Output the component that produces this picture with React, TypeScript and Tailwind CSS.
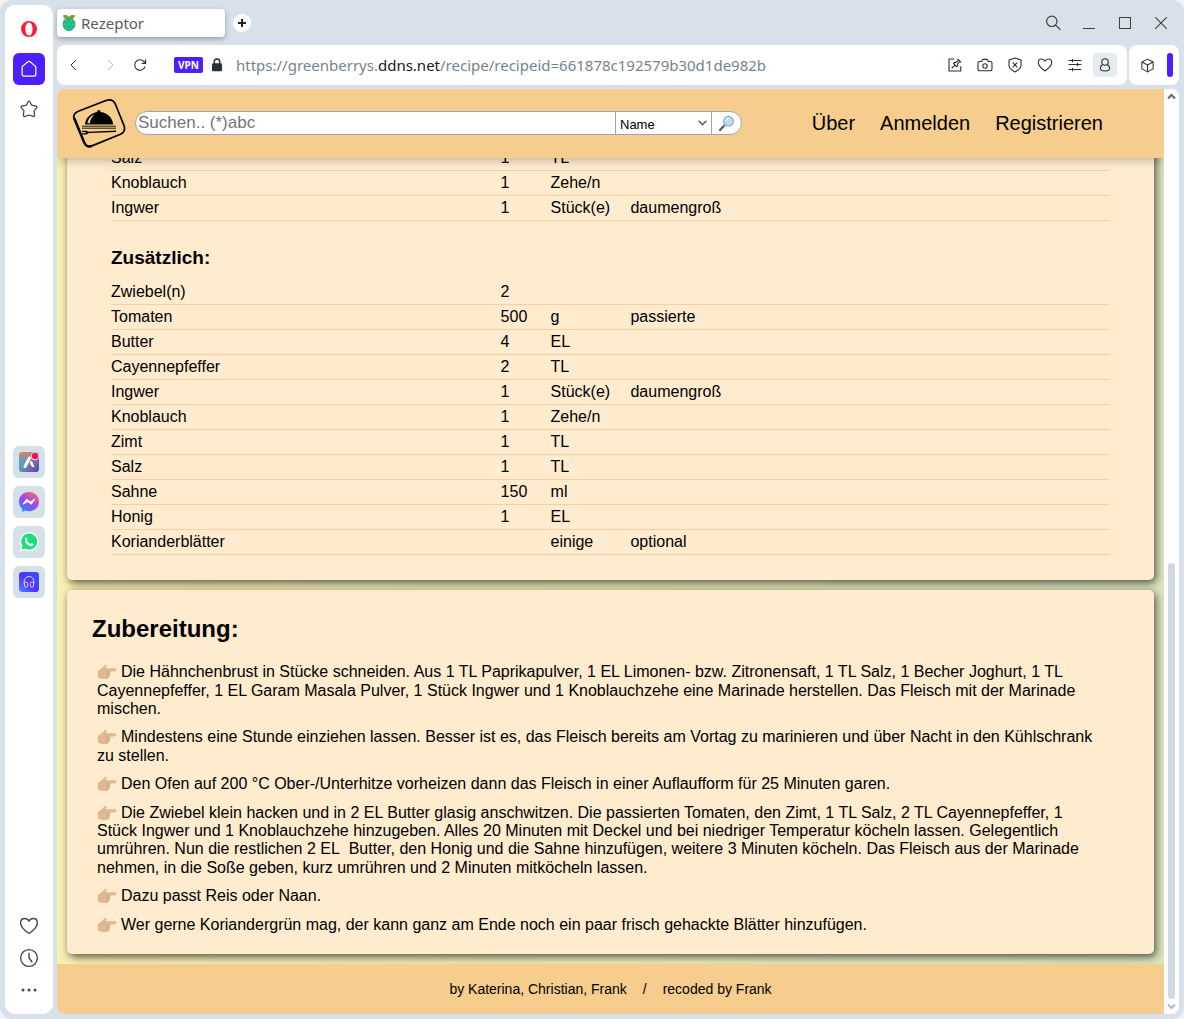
import React from "react";

type Ingredient = { name: string; amount?: string; unit?: string; note?: string };

const marinade: Ingredient[] = [
  { name: "Salz", amount: "1", unit: "TL" },
  { name: "Knoblauch", amount: "1", unit: "Zehe/n" },
  { name: "Ingwer", amount: "1", unit: "Stück(e)", note: "daumengroß" },
];

const extras: Ingredient[] = [
  { name: "Zwiebel(n)", amount: "2" },
  { name: "Tomaten", amount: "500", unit: "g", note: "passierte" },
  { name: "Butter", amount: "4", unit: "EL" },
  { name: "Cayennepfeffer", amount: "2", unit: "TL" },
  { name: "Ingwer", amount: "1", unit: "Stück(e)", note: "daumengroß" },
  { name: "Knoblauch", amount: "1", unit: "Zehe/n" },
  { name: "Zimt", amount: "1", unit: "TL" },
  { name: "Salz", amount: "1", unit: "TL" },
  { name: "Sahne", amount: "150", unit: "ml" },
  { name: "Honig", amount: "1", unit: "EL" },
  { name: "Korianderblätter", unit: "einige", note: "optional" },
];

const steps = [
  "Die Hähnchenbrust in Stücke schneiden. Aus 1 TL Paprikapulver, 1 EL Limonen- bzw. Zitronensaft, 1 TL Salz, 1 Becher Joghurt, 1 TL Cayennepfeffer, 1 EL Garam Masala Pulver, 1 Stück Ingwer und 1 Knoblauchzehe eine Marinade herstellen. Das Fleisch mit der Marinade mischen.",
  "Mindestens eine Stunde einziehen lassen. Besser ist es, das Fleisch bereits am Vortag zu marinieren und über Nacht in den Kühlschrank zu stellen.",
  "Den Ofen auf 200 °C Ober-/Unterhitze vorheizen dann das Fleisch in einer Auflaufform für 25 Minuten garen.",
  "Die Zwiebel klein hacken und in 2 EL Butter glasig anschwitzen. Die passierten Tomaten, den Zimt, 1 TL Salz, 2 TL Cayennepfeffer, 1 Stück Ingwer und 1 Knoblauchzehe hinzugeben. Alles 20 Minuten mit Deckel und bei niedriger Temperatur köcheln lassen. Gelegentlich umrühren. Nun die restlichen 2 EL\u00a0 Butter, den Honig und die Sahne hinzufügen, weitere 3 Minuten köcheln. Das Fleisch aus der Marinade nehmen, in die Soße geben, kurz umrühren und 2 Minuten mitköcheln lassen.",
  "Dazu passt Reis oder Naan.",
  "Wer gerne Koriandergrün mag, der kann ganz am Ende noch ein paar frisch gehackte Blätter hinzufügen.",
];

function Icon({ size = 16, className = "", sw = 1.1, children }: { size?: number; className?: string; sw?: number; children: React.ReactNode }) {
  return (
    <svg width={size} height={size} viewBox="0 0 16 16" fill="none" stroke="currentColor" strokeWidth={sw} strokeLinecap="round" strokeLinejoin="round" className={className} aria-hidden="true">
      {children}
    </svg>
  );
}

const HEART = "M8 14C5.5 12.3 1.3 9.3 1.3 5.6C1.3 3.4 2.8 2 4.6 2C6.2 2 7.4 2.9 8 4.2C8.6 2.9 9.8 2 11.4 2C13.2 2 14.7 3.4 14.7 5.6C14.7 9.3 10.5 12.3 8 14Z";

function Hand() {
  return (
    <svg width="20" height="16" viewBox="0 0 20 16" className="mr-1 inline-block align-[-3px]" aria-hidden="true">
      <path d="M.8 7.2C2.6 5.6 5 4.6 6.6 2.6C7.5 1.2 8.3.5 9.1 1C10.1 1.8 9.4 3.4 8.4 4.3H18C19.9 4.3 19.9 7.2 18 7.3L12.6 7.7C13.8 8.2 13.7 9.9 12.7 10.3C13.4 11 13 12.3 12 12.6C12.3 13.8 11.4 14.7 9.7 14.9C6.5 15.4 4 14.9 .8 13.4Z" fill="#e0b896" />
      <path d="M8.6 4.6L7 6.2M12.6 7.8H9.1M12.7 10.3H9.2M12 12.6H9.1" stroke="#cda482" strokeWidth=".7" fill="none" />
    </svg>
  );
}

function Magnifier() {
  return (
    <svg width="17" height="17" viewBox="0 0 17 17" aria-hidden="true">
      <path d="M2 15L6.5 10.2" stroke="#555a5e" strokeWidth="2.2" strokeLinecap="round" />
      <path d="M5.8 11L7.2 9.6" stroke="#a6adb1" strokeWidth="1.6" />
      <circle cx="10.5" cy="6.2" r="4.8" fill="#b3e2fa" stroke="#93a3ac" strokeWidth="1.2" />
      <path d="M7.8 6C8 4.4 9.2 3.4 10.8 3.4" stroke="#e9f8ff" strokeWidth="1.2" fill="none" />
    </svg>
  );
}

function Logo() {
  return (
    <svg width="54" height="50" viewBox="0 0 54 50" aria-hidden="true">
      <path d="M7 13L34 2.5C39 .8 41.5 2 43.3 6L52 27.5C53.6 32 52.2 34.4 48.5 36.3L20.5 47.6C16 49.5 13.5 48 12 44L2.2 21C.6 17 2.5 14.8 7 13Z" fill="none" stroke="#000" strokeWidth="1.7" />
      <path d="M2.2 20L12 44C13.5 48 16 49.5 20 47.8" fill="none" stroke="#000" strokeWidth="2.4" />
      <path d="M13 26.5C13.5 20 18 15.5 25 14C25 12.8 25.8 12 26.8 12S28.6 12.8 28.6 14C36 15 40.6 20 41.2 26.5Z" fill="#000" />
      <path d="M15.5 25.2C16.1 20.5 19.3 17.5 23 16C20 18.5 18.2 21.5 17.8 25.2Z" fill="#f6cd8d" />
      <path d="M10 28.2H44M10 30.2H44" stroke="#000" strokeWidth=".9" />
      <path d="M10 32.7H14.5L16.5 33.8L44 32.5V34L17 35L14.5 36.5H10V35.3H13.5V34H10Z" fill="#000" />
    </svg>
  );
}

function Raspberry() {
  return (
    <svg width="14" height="18" viewBox="0 0 14 18" aria-hidden="true">
      <path d="M1 1.5C3 .6 5.8 1 7 3C8.2 1 11 .6 13 1.5C12.8 4 10.5 6 7 5.5C3.5 6 1.2 4 1 1.5Z" fill="#76a832" />
      <path d="M7 4.2C11 4 13.4 6.8 13.4 10C13.4 13.8 10.4 17 7 17.2C3.6 17 .6 13.8 .6 10C.6 6.8 3 4 7 4.2Z" fill="#18a69a" />
      <g fill="#35cf74">
        <circle cx="4.8" cy="6.9" r="1.6" /><circle cx="9.2" cy="6.9" r="1.6" /><circle cx="7" cy="10.2" r="1.8" /><circle cx="2.8" cy="10.3" r="1.5" /><circle cx="11.2" cy="10.3" r="1.5" /><circle cx="4.7" cy="13.4" r="1.5" /><circle cx="9.3" cy="13.4" r="1.5" /><circle cx="7" cy="15.6" r="1.1" />
      </g>
    </svg>
  );
}

function Sidebar() {
  const tile = "flex h-8 w-8 items-center justify-center rounded-md bg-[#d6e0e7]";
  return (
    <nav aria-label="Seitenleiste" className="flex w-12 shrink-0 flex-col items-center rounded-[10px] bg-white pt-2 pb-2 text-[#3d4852]">
      <button aria-label="Opera" className="flex h-8 w-8 items-center justify-center">
        <svg width="16" height="16" viewBox="0 0 16 16" aria-hidden="true">
          <path fillRule="evenodd" d="M8 0A8 8 0 1 0 8 16A8 8 0 1 0 8 0ZM8 1.4C10.2 1.4 11.6 4.4 11.6 8S10.2 14.6 8 14.6S4.4 11.6 4.4 8S5.8 1.4 8 1.4Z" fill="#fa1e35" />
        </svg>
      </button>
      <button aria-label="Start" className="mt-2 flex h-8 w-8 items-center justify-center rounded-md bg-[#4d1ffc] text-white">
        <Icon size={18} sw={1.1}>
          <path d="M1.9 6.9C1.9 6.2 2.2 5.6 2.7 5.2L7 1.6C7.6 1.1 8.4 1.1 9 1.6L13.3 5.2C13.8 5.6 14.1 6.2 14.1 6.9V12.6C14.1 13.6 13.4 14.3 12.4 14.3H3.6C2.6 14.3 1.9 13.6 1.9 12.6Z" />
        </Icon>
      </button>
      <button aria-label="Lesezeichen" className="mt-2 flex h-8 w-8 items-center justify-center">
        <Icon size={18}>
          <path d="M7.2 1.6C7.5.9 8.5.9 8.8 1.6L10.4 4.6L14.3 5.4C15.1 5.6 15.4 6.4 14.8 7L12.5 9.7L13 13.5C13.1 14.4 12.4 15 11.6 14.6L8 13.3L4.4 14.6C3.6 15 2.9 14.4 3 13.5L3.5 9.7L1.2 7C.6 6.4.9 5.6 1.7 5.4L5.6 4.6Z" />
        </Icon>
      </button>
      <div className="flex flex-1 flex-col items-center justify-center gap-2 pt-2">
        <button aria-label="Aria" className={tile}>
          <svg width="22" height="22" viewBox="0 0 22 22" aria-hidden="true">
            <defs>
              <linearGradient id="aria" x1="0" y1="0" x2="1" y2="1"><stop stopColor="#f18a3b" /><stop offset=".4" stopColor="#a0839a" /><stop offset="1" stopColor="#4746b8" /></linearGradient>
              <radialGradient id="ariaTeal" cx="0" cy=".6" r=".6"><stop stopColor="#28b4df" stopOpacity=".9" /><stop offset="1" stopColor="#28a9df" stopOpacity="0" /></radialGradient>
            </defs>
            <rect x="1" y="1" width="20" height="20" rx="3" fill="url(#aria)" />
            <rect x="1" y="1" width="20" height="20" rx="3" fill="url(#ariaTeal)" />
            <path d="M7 15.5L11.5 7" stroke="#fff" strokeWidth="3" strokeLinecap="round" />
            <path d="M12 11C12 9.8 14 10 14.5 11.5L16.5 16H14.6C13 14.8 12 13 12 11Z" fill="#fff" />
            <circle cx="17" cy="5" r="3.8" fill="#fa0a55" stroke="#d6e0e7" />
          </svg>
        </button>
        <button aria-label="Messenger" className={tile}>
          <svg width="22" height="22" viewBox="0 0 22 22" aria-hidden="true">
            <defs><linearGradient id="msg" x1=".15" y1="1" x2=".8" y2="0"><stop stopColor="#1593ff" /><stop offset=".5" stopColor="#9c45f5" /><stop offset="1" stopColor="#ff6670" /></linearGradient></defs>
            <path d="M11 1C5.2 1 1 5.2 1 10.7C1 13.7 2.2 16.2 4.2 18V21L7.2 19.5C8.3 19.9 9.6 20.2 11 20.2C16.8 20.2 21 16 21 10.7S16.8 1 11 1Z" fill="url(#msg)" />
            <path d="M5 13.2L8.7 8.2L12.2 11L16.8 8L13.3 13.2L9.7 10.5Z" fill="#fff" stroke="#fff" strokeLinejoin="round" />
          </svg>
        </button>
        <button aria-label="WhatsApp" className={tile}>
          <svg width="22" height="22" viewBox="0 0 22 22" aria-hidden="true">
            <path d="M11.2 1A9.6 9.6 0 0 0 3 15.5L1.4 20.8L6.8 19.3A9.6 9.6 0 1 0 11.2 1Z" fill="#fff" />
            <path d="M11.3 2.6A8 8 0 0 0 4.6 15L3.7 18.4L7.2 17.5A8 8 0 1 0 11.3 2.6Z" fill="#18e277" />
            <path d="M8.8 6.5C9.4 7.3 9.7 8.2 9.5 8.6L8.8 9.6C9.7 11.3 11 12.4 12.4 13L13.5 12C14.2 12 15.4 12.5 15.7 13.2C15.3 15 13.8 15.5 12.3 15C9.5 14.2 7.3 12 6.9 9.2C6.8 7.8 7.5 6.6 8.8 6.5Z" fill="#fff" />
          </svg>
        </button>
        <button aria-label="Player" className={tile}>
          <svg width="20" height="20" viewBox="0 0 20 20" aria-hidden="true">
            <defs><linearGradient id="player" x1="0" y1="1" x2="1" y2="0"><stop stopColor="#4c8bff" /><stop offset=".45" stopColor="#5630ff" /><stop offset="1" stopColor="#2a5bff" /></linearGradient></defs>
            <rect width="20" height="20" rx="3" fill="url(#player)" />
            <path d="M5.7 13.5C4.6 11 4.6 4.5 10 4.5S15.4 11 14.3 13.5" fill="none" stroke="#ddd6ff" />
            <rect x="5.5" y="10" width="3.2" height="5.2" rx="1.5" fill="none" stroke="#ddd6ff" />
            <rect x="11.3" y="10" width="3.2" height="5.2" rx="1.5" fill="none" stroke="#ddd6ff" />
          </svg>
        </button>
      </div>
      <button aria-label="Favoriten" className="flex h-8 w-8 items-center justify-center"><Icon size={20}><path d={HEART} /></Icon></button>
      <button aria-label="Verlauf" className="flex h-8 w-8 items-center justify-center"><Icon size={20}><circle cx="8" cy="8" r="6.7" /><path d="M8 4.2V8L10.3 11" /></Icon></button>
      <button aria-label="Mehr" className="flex h-8 w-8 items-center justify-center">
        <svg width="16" height="4" viewBox="0 0 16 4" fill="currentColor" aria-hidden="true"><circle cx="2" cy="2" r="1.5" /><circle cx="8" cy="2" r="1.5" /><circle cx="14" cy="2" r="1.5" /></svg>
      </button>
    </nav>
  );
}

function TitleBar() {
  const btn = "flex h-6 w-9 items-center justify-center";
  return (
    <div className="flex h-10 items-center pb-1 text-[#3c4043]">
      <div className="flex h-7 w-[168px] items-center gap-[5px] rounded-[4px] bg-white pl-[5px] shadow-[0_2px_5px_rgba(60,75,90,0.45)]">
        <Raspberry />
        <span className="font-['Noto_Sans',sans-serif] text-[15px] leading-5 text-[#555b60]">Rezeptor</span>
      </div>
      <button aria-label="Neuer Tab" className="ml-2 flex h-[18px] w-[18px] items-center justify-center rounded-full bg-white text-[#1d2328]">
        <svg width="8" height="8" viewBox="0 0 8 8" aria-hidden="true"><path d="M4 0V8M0 4H8" stroke="currentColor" strokeWidth="2" /></svg>
      </button>
      <div className="ml-auto flex">
        <button aria-label="Suchen" className={btn}><Icon sw={1.2}><circle cx="6.8" cy="6.3" r="5.2" /><path d="M10.6 10.1L15 14.3" /></Icon></button>
        <button aria-label="Minimieren" className={btn}><svg width="12" height="12" aria-hidden="true"><path d="M0 11.5H12" stroke="currentColor" /></svg></button>
        <button aria-label="Maximieren" className={btn}><svg width="12" height="12" aria-hidden="true"><rect x=".5" y=".5" width="11" height="11" fill="none" stroke="currentColor" /></svg></button>
        <button aria-label="Schließen" className={btn}><svg width="12" height="12" aria-hidden="true"><path d="M.3.3L11.7 11.7M11.7.3L.3 11.7" stroke="currentColor" strokeWidth="1.1" /></svg></button>
      </div>
    </div>
  );
}

function Toolbar() {
  const btn = "flex h-6 w-6 items-center justify-center rounded";
  return (
    <div className="flex h-10 gap-0.5 text-[#28323b]">
      <div className="flex min-w-0 flex-1 items-center rounded-[8px] bg-white pl-[5px] pr-[10px]">
        <button aria-label="Zurück" className={btn}><Icon sw={1}><path d="M9.8 3.2L5 8L9.8 12.8" /></Icon></button>
        <button aria-label="Vor" className={btn + " ml-3 text-[#b7bcc1]"}><Icon sw={1}><path d="M6.2 3.2L11 8L6.2 12.8" /></Icon></button>
        <button aria-label="Neu laden" className={btn + " ml-1.5"}><Icon size={14} sw={1.3}><path d="M13.5 10.2A6 6 0 1 1 12.6 4.2L14.3 6M14.4 2V6.1H10.4" /></Icon></button>
        <span className="ml-[22px] flex h-4 w-[29px] items-center justify-center rounded-[2px] bg-[#4d1ffc] font-['Noto_Sans',sans-serif] text-[10px] font-bold text-white">VPN</span>
        <svg width="10" height="14" viewBox="0 0 10 14" className="ml-[9px] shrink-0" aria-hidden="true">
          <path d="M2.3 6V3.7C2.3 .2 7.7 .2 7.7 3.7V6" fill="none" stroke="#27313a" strokeWidth="1.5" />
          <rect y="5.2" width="10" height="8" rx="1.3" fill="#27313a" />
        </svg>
        <span className="ml-[14px] font-['Noto_Sans',sans-serif] text-[15px] leading-5 whitespace-nowrap text-[#74848f]">
          https://greenberrys.<span className="text-[#151b20]">ddns.net</span>/recipe/recipeid=661878c192579b30d1de982b
        </span>
        <div className="ml-auto flex gap-1.5">
          <button aria-label="Bearbeiten" className={btn}><Icon><path d="M6.8 2H2V14H13.8V9.5M5 11L7.6 8.4M10.8 2.2L13.8 5.2M11.6 3L9.2 5.4C8 5.2 7 5.6 6.4 6.4L9.8 9.8C10.6 9.2 10.9 8.1 10.6 6.8L13 4.4" /></Icon></button>
          <button aria-label="Schnappschuss" className={btn}><Icon><path d="M2.7 4.5H4.7L5.8 2.4H10.2L11.3 4.5H13.3C14.4 4.5 15 5.1 15 6.2V12C15 13.1 14.4 13.7 13.3 13.7H2.7C1.6 13.7 1 13.1 1 12V6.2C1 5.1 1.6 4.5 2.7 4.5Z" /><circle cx="8" cy="9" r="2.2" /></Icon></button>
          <button aria-label="Schutz" className={btn}><Icon><path d="M8 1L14 3V8.5C14 11.5 10.5 13.6 8 15C5.5 13.6 2 11.5 2 8.5V3ZM6 5.8L10 9.8M10 5.8L6 9.8" /></Icon></button>
          <button aria-label="Merken" className={btn}><Icon><path d={HEART} /></Icon></button>
          <button aria-label="Einstellungen" className={btn}><Icon><path d="M2 3.5H14M2 7.5H14M2 12.5H14M5.5 2.2V4.8M10.5 6.2V8.8M5.5 11.2V13.8" /></Icon></button>
          <button aria-label="Profil" className={btn + " bg-[#e6ebef]"}><Icon><circle cx="8" cy="5" r="3.3" /><path d="M5.5 7.5C4 8.6 3.3 10.1 3.3 11.6C3.3 13.6 4.5 14 8 14S12.7 13.6 12.7 11.6C12.7 10.1 12 8.6 10.5 7.5" /></Icon></button>
        </div>
      </div>
      <div className="flex w-[50px] items-center rounded-[8px] bg-white pl-1.5">
        <button aria-label="Erweiterungen" className={btn}><Icon size={15}><path d="M8 1.2L14 4.3V11.6L8 14.8L2 11.6V4.3ZM2 4.3L8 7.5L14 4.3M8 7.5V14.8" /></Icon></button>
        <span className="ml-2 h-6 w-1.5 rounded-[3px] bg-[#4d1ffc]" />
      </div>
    </div>
  );
}

function IngredientTable({ rows, label }: { rows: Ingredient[]; label: string }) {
  return (
    <table aria-label={label} className="w-full table-fixed border-separate border-spacing-0">
      <colgroup>
        <col className="w-[39%]" />
        <col className="w-[5%]" />
        <col className="w-[8%]" />
        <col />
      </colgroup>
      <tbody>
        {rows.map((r) => (
          <tr key={r.name} className="leading-6 [&>td]:border-b [&>td]:border-[#fccd9f]">
            <td>{r.name}</td>
            <td>{r.amount}</td>
            <td>{r.unit}</td>
            <td>{r.note}</td>
          </tr>
        ))}
      </tbody>
    </table>
  );
}

function Page() {
  const card = "mx-[10px] rounded-[5px] bg-[#ffebcd] shadow-[2px_3px_8px_rgba(0,0,0,0.65)]";
  return (
    <div className="flex min-w-0 flex-1 flex-col bg-gradient-to-r from-[#faf0b4] to-[#dce6bd] font-['Liberation_Sans',Arial,sans-serif] text-black">
      <header className="z-10 flex h-[69px] shrink-0 items-center bg-[#f6cd8d] pb-px pl-[15px] shadow-[0_2px_10px_rgba(0,0,0,0.25)]">
        <a href="#start" aria-label="Rezeptor"><Logo /></a>
        <form className="ml-[9px] flex h-6 w-[607px] shrink-0 overflow-hidden rounded-[12px] border border-[#a5a5a5] bg-white" onSubmit={(e) => e.preventDefault()}>
          <input aria-label="Suchen" placeholder="Suchen.. (*)abc" className="min-w-0 flex-1 pl-0.5 text-[17px] outline-none placeholder:text-[#757575]" />
          <div className="relative w-[97px] shrink-0 border-x border-[#a5a5a5]">
            <select aria-label="Suchfeld" className="h-full w-full appearance-none bg-white pb-0.5 pl-1 text-[13px] outline-none"><option>Name</option></select>
            <svg width="9" height="6" viewBox="0 0 9 6" className="pointer-events-none absolute top-2 right-1" aria-hidden="true"><path d="M.6.8L4.5 4.6L8.4.8" fill="none" stroke="#5f5f5f" strokeWidth="1.5" /></svg>
          </div>
          <button aria-label="Suche starten" className="flex w-[29px] items-center justify-center"><Magnifier /></button>
        </form>
        <nav aria-label="Hauptmenü" className="ml-auto flex gap-[25px] pr-[61px] text-[20px] leading-6">
          <a href="#ueber">Über</a>
          <a href="#anmelden">Anmelden</a>
          <a href="#registrieren">Registrieren</a>
        </nav>
      </header>
      <main className="flex min-h-0 flex-1 flex-col justify-end overflow-hidden">
        <section className={card + " px-11 pb-[25px]"}>
          <div className="mx-auto max-w-[1000px]">
            <IngredientTable rows={marinade} label="Marinade" />
            <h3 className="mt-6 mb-2.5 text-[19px] leading-[25px] font-bold">Zusätzlich:</h3>
            <IngredientTable rows={extras} label="Zusätzlich" />
          </div>
        </section>
        <section className={card + " mt-[10px] px-[25px] pt-[25px] pb-5"}>
          <h2 className="text-[24px] leading-7 font-bold">Zubereitung:</h2>
          <div className="mt-5 flex flex-col gap-[10px] pr-[25px] pl-[5px] leading-[1.15]">
            {steps.map((s) => (
              <p key={s}><Hand />{s}</p>
            ))}
          </div>
        </section>
        <footer className="mt-[10px] flex h-[50px] shrink-0 items-center justify-center gap-4 bg-[#f6cd8d] text-[14px]">
          <span>by Katerina, Christian, Frank</span>
          <span>/</span>
          <span>recoded by Frank</span>
        </footer>
      </main>
    </div>
  );
}

export default function App() {
  return (
    <div className="h-screen bg-[#f2f2f0]">
      <div className="flex h-full gap-1 rounded-[12px] bg-[#d8e1e9] p-[5px]">
        <Sidebar />
        <div className="flex min-w-0 flex-1 flex-col">
          <TitleBar />
          <Toolbar />
          <div className="mt-1 flex min-h-0 flex-1 overflow-hidden rounded-[8px] bg-white">
            <Page />
            <div aria-hidden="true" className="z-10 flex w-[15px] shrink-0 flex-col items-center justify-between bg-white py-1">
              <svg width="9" height="7" viewBox="0 0 9 7"><path d="M1 5.5L4.5 2L8 5.5" fill="none" stroke="#666" strokeWidth="2" /></svg>
              <div className="flex w-[7px] flex-1 flex-col justify-end pb-1">
                <div className="h-[48.5%] rounded-[3px] bg-[#cfd9e2]" />
              </div>
              <svg width="9" height="7" viewBox="0 0 9 7"><path d="M1 1.5L4.5 5L8 1.5" fill="none" stroke="#b5b5b5" strokeWidth="2" /></svg>
            </div>
          </div>
        </div>
      </div>
    </div>
  );
}
